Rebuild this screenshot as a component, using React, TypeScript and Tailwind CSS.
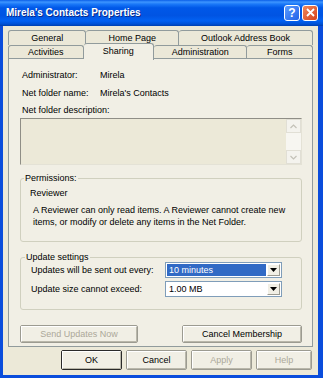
import React from 'react';

const FONT = "font-['Liberation_Sans',Arial,sans-serif]";

const Tab = ({ label, w, first, active }: { label: string; w: string; first?: boolean; active?: boolean }) => (
    <div
        className={`${w} flex items-center justify-center border-t border-r border-[#919b9c] rounded-t-[3px] ${first ? 'border-l' : ''} ${
            active ? 'relative z-10 -mt-[2px] -mb-[1px] h-[17px] bg-[#f1efe5] pb-[2px]' : 'h-full bg-[#ebe8d8]'
        }`}
    >
        {label}
    </div>
);

const Btn = ({ label, w, disabled, def }: { label: string; w: string; disabled?: boolean; def?: boolean }) => (
    <div className={`${w} h-full rounded-[2px] border ${def ? 'border-[#2a2a2a]' : 'border-[#9c9b91]'} bg-[#f1efe5]`}>
        <div
            className={`h-full flex items-center justify-center border-t border-l border-t-white border-l-white border-b border-r border-b-[#b9b7aa] border-r-[#b9b7aa] ${
                disabled ? 'text-[#aca899]' : 'text-black'
            }`}
        >
            {label}
        </div>
    </div>
);

const Arrow = ({ up, color }: { up?: boolean; color: string }) => (
    <svg width="7" height="5" viewBox="0 0 7 5">
        {up ? <path d="M0.5 4 L3.5 1 L6.5 4" fill="none" stroke={color} strokeWidth="1.2" /> : <path d="M0.5 1 L3.5 4 L6.5 1" fill="none" stroke={color} strokeWidth="1.2" />}
    </svg>
);

const Select = ({ value, selected }: { value: string; selected?: boolean }) => (
    <div className="w-[117px] h-[16px] flex border border-[#7f9db9] bg-white p-[1px]">
        <div className={`flex-1 flex items-center pl-[2px] ${selected ? 'bg-[#316ac5] text-white' : 'text-black'}`}>{value}</div>
        <div className="w-[13px] ml-[1px] flex items-center justify-center bg-[#f1efe5] border border-t-white border-l-white border-b-[#9c9b91] border-r-[#9c9b91]">
            <svg width="7" height="4" viewBox="0 0 7 4">
                <path d="M0 0 H7 L3.5 4 Z" fill="#000" />
            </svg>
        </div>
    </div>
);

export default function App() {
    return (
        <div className={`w-[323px] h-[378px] flex flex-col bg-[#0a4ddc] ${FONT} text-[9px] leading-[12px] text-black`}>
            {/* title bar */}
            <div className="h-[26px] flex items-center pl-[6px] pr-[5px] bg-[linear-gradient(to_bottom,#0a5fe8_0%,#3d95ff_8%,#1a78f8_16%,#0058e8_30%,#0054e3_60%,#0261f2_80%,#0052d6_92%,#003fae_100%)]">
                <span className="flex-1 text-white font-bold text-[10px] [text-shadow:1px_1px_0_#0a2a8a]">Mirela's Contacts Properties</span>
                <div className="flex gap-[2px] -mt-[1px]">
                    <div className="w-[16px] h-[16px] rounded-[3px] border border-white bg-[linear-gradient(135deg,#5c9cff,#2162e8)] flex items-center justify-center text-white font-bold text-[12px]">?</div>
                    <div className="w-[16px] h-[16px] rounded-[3px] border border-white bg-[linear-gradient(135deg,#f08a5c,#d4401c)] flex items-center justify-center">
                        <svg width="9" height="9" viewBox="0 0 9 9">
                            <path d="M1 1 L8 8 M8 1 L1 8" stroke="#fff" strokeWidth="1.8" />
                        </svg>
                    </div>
                </div>
            </div>

            {/* dialog body */}
            <div className="flex-1 ml-[3px] mr-[5px] mb-[3px] bg-[#ece9d8] flex flex-col px-[5px] pt-[4px]">
                {/* tabs */}
                <div className="flex h-[15px]">
                    <Tab label="General" w="w-[79px]" first />
                    <Tab label="Home Page" w="w-[93px]" />
                    <Tab label="Outlook Address Book" w="w-[135px]" />
                </div>
                <div className="flex h-[13px]">
                    <Tab label="Activities" w="w-[76px]" first />
                    <Tab label="Sharing" w="w-[71px]" active />
                    <Tab label="Administration" w="w-[94px]" />
                    <Tab label="Forms" w="w-[66px]" />
                </div>

                {/* panel */}
                <div className="h-[289px] border border-[#919b9c] bg-[#f1efe5] flex flex-col pl-[11px] pr-[10px] pt-[10px]">
                    <div className="flex ml-[2px]">
                        <span className="w-[78px]">Administrator:</span>
                        <span>Mirela</span>
                    </div>
                    <div className="flex ml-[2px] mt-[6px]">
                        <span className="w-[78px]">Net folder name:</span>
                        <span>Mirela's Contacts</span>
                    </div>
                    <div className="ml-[2px] mt-[5px]">Net folder description:</div>
                    <div className="mt-[2px] h-[47px] flex border border-t-[#8f8e86] border-l-[#8f8e86] border-b-[#e4e2d6] border-r-[#e4e2d6] bg-[#ece9d8]">
                        <div className="flex-1" />
                        <div className="w-[15px] flex flex-col bg-[#f7f6f1]">
                            <div className="h-[14px] flex items-center justify-center border border-[#e1dfd5] bg-[#f4f3ee]">
                                <Arrow up color="#c3c1b7" />
                            </div>
                            <div className="flex-1" />
                            <div className="h-[14px] flex items-center justify-center border border-[#e1dfd5] bg-[#f4f3ee]">
                                <Arrow color="#c3c1b7" />
                            </div>
                        </div>
                    </div>

                    {/* permissions */}
                    <fieldset className="mt-[7px] border border-[#d0d0bf] rounded-[3px] px-[3px] pb-[13px]">
                        <legend className="px-[1px]">Permissions:</legend>
                        <div className="ml-[6px] mt-[3px]">Reviewer</div>
                        <p className="ml-[9px] mt-[5px] w-[262px]">
                            A Reviewer can only read items. A Reviewer cannot create new items, or modify or delete any items in the Net Folder.
                        </p>
                    </fieldset>

                    {/* update settings */}
                    <fieldset className="mt-[9px] border border-[#d0d0bf] rounded-[3px] px-[3px] pb-[12px]">
                        <legend className="px-[1px] ml-[1px]">Update settings</legend>
                        <div className="flex items-center -mt-[1px] ml-[7px]">
                            <span className="w-[134px]">Updates will be sent out every:</span>
                            <Select value="10 minutes" selected />
                        </div>
                        <div className="flex items-center mt-[3px] ml-[7px]">
                            <span className="w-[134px]">Update size cannot exceed:</span>
                            <Select value="1.00 MB" />
                        </div>
                    </fieldset>

                    <div className="flex justify-between h-[18px] mt-[15px]">
                        <Btn label="Send Updates Now" w="w-[118px]" disabled />
                        <Btn label="Cancel Membership" w="w-[120px]" />
                    </div>
                </div>

                {/* dialog buttons */}
                <div className="flex justify-end gap-[4px] h-[20px] mt-[3px] pr-[1px]">
                    <Btn label="OK" w="w-[61px]" def />
                    <Btn label="Cancel" w="w-[61px]" />
                    <Btn label="Apply" w="w-[61px]" disabled />
                    <Btn label="Help" w="w-[56px]" disabled />
                </div>
            </div>
        </div>
    );
}
